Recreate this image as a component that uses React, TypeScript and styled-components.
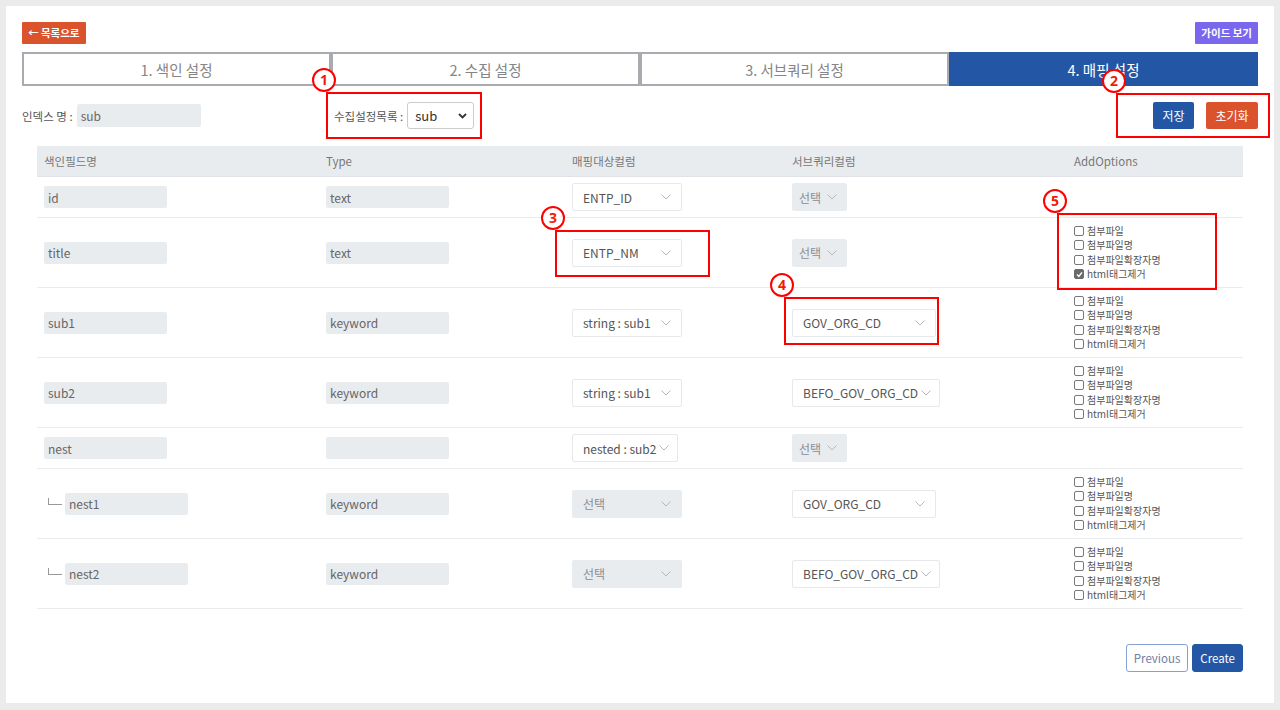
import { FC, ReactNode } from "react";
import styled, { createGlobalStyle } from "styled-components";

const BLUE = "#2356a5";
const ORANGE = "#db532d";

type SelectSpec = { label: string; width?: number; disabled?: boolean; compact?: boolean };

type FieldRow = {
  name: string;
  type: string;
  nested?: boolean;
  map: SelectSpec;
  sub: SelectSpec;
  options?: boolean[];
  mapMark?: number;
  subMark?: number;
  optionMark?: number;
};

const OPTION_LABELS = ["첨부파일", "첨부파일명", "첨부파일확장자명", "html태그제거"];
const NONE = [false, false, false, false];
const PICK_SMALL: SelectSpec = { label: "선택", width: 55, disabled: true, compact: true };
const PICK_WIDE: SelectSpec = { label: "선택", width: 110, disabled: true };

const rows: FieldRow[] = [
  { name: "id", type: "text", map: { label: "ENTP_ID", width: 110 }, sub: PICK_SMALL },
  {
    name: "title",
    type: "text",
    map: { label: "ENTP_NM", width: 110 },
    sub: PICK_SMALL,
    options: [false, false, false, true],
    mapMark: 3,
    optionMark: 5,
  },
  {
    name: "sub1",
    type: "keyword",
    map: { label: "string : sub1", width: 110 },
    sub: { label: "GOV_ORG_CD", width: 144 },
    options: NONE,
    subMark: 4,
  },
  {
    name: "sub2",
    type: "keyword",
    map: { label: "string : sub1", width: 110 },
    sub: { label: "BEFO_GOV_ORG_CD" },
    options: NONE,
  },
  { name: "nest", type: "", map: { label: "nested : sub2" }, sub: PICK_SMALL },
  {
    name: "nest1",
    type: "keyword",
    nested: true,
    map: PICK_WIDE,
    sub: { label: "GOV_ORG_CD", width: 144 },
    options: NONE,
  },
  {
    name: "nest2",
    type: "keyword",
    nested: true,
    map: PICK_WIDE,
    sub: { label: "BEFO_GOV_ORG_CD" },
    options: NONE,
  },
];

const Chevron = () => (
  <svg width="10" height="6" viewBox="0 0 10 6">
    <polyline points="0.5,0.5 5,5 9.5,0.5" fill="none" stroke="#b4b8bd" strokeWidth="1" />
  </svg>
);

const Select: FC<{ spec: SelectSpec }> = ({ spec }) => (
  <SelectBox $width={spec.width} $disabled={spec.disabled} $compact={spec.compact}>
    <span>{spec.label}</span>
    <Chevron />
  </SelectBox>
);

type MarkProps = {
  n: number;
  inset: [number, number, number, number];
  children: ReactNode;
};

// red annotation frame + numbered circle drawn over the thing it points at
const Mark: FC<MarkProps> = ({ n, inset, children }) => (
  <Marked>
    {children}
    <Frame $t={inset[0]} $r={inset[1]} $b={inset[2]} $l={inset[3]}>
      <Badge>{n}</Badge>
    </Frame>
  </Marked>
);

const Options: FC<{ values: boolean[] }> = ({ values }) => (
  <OptionList>
    {OPTION_LABELS.map((label, i) => (
      <Option key={label}>
        <Check $on={values[i]}>
          {values[i] && (
            <svg width="7" height="7" viewBox="0 0 7 7">
              <polyline points="1,3.6 2.8,5.4 6,1.4" fill="none" stroke="#fff" strokeWidth="1.4" />
            </svg>
          )}
        </Check>
        {label}
      </Option>
    ))}
  </OptionList>
);

const App: FC = () => {
  return (
    <>
      <GlobalStyle />
      <Panel>
        <TopBar>
          <SmallButton $bg={ORANGE}>← 목록으로</SmallButton>
          <SmallButton $bg="#7b67ee">가이드 보기</SmallButton>
        </TopBar>

        <Tabs>
          <Tab>1. 색인 설정</Tab>
          <Tab>2. 수집 설정</Tab>
          <Tab>3. 서브쿼리 설정</Tab>
          <Tab $active>4. 매핑 설정</Tab>
        </Tabs>

        <Toolbar>
          <Group>
            <Label>인덱스 명 :</Label>
            <Field readOnly value="sub" $width={124} $height={23} />
          </Group>
          <CollectGroup>
            <Mark n={1} inset={[-10, -8, -10, -8]}>
              <Group>
                <Label>수집설정목록 :</Label>
                <NativeSelect>
                  <span>sub</span>
                  <svg width="9" height="6" viewBox="0 0 9 6">
                    <polyline points="1,1 4.5,4.5 8,1" fill="none" stroke="#333" strokeWidth="1.8" />
                  </svg>
                </NativeSelect>
              </Group>
            </Mark>
          </CollectGroup>
          <div />
          <Actions>
            <Mark n={2} inset={[-9, -12, -9, -37]}>
              <ActionRow>
                <ActionButton $bg={BLUE} $width={41}>저장</ActionButton>
                <ActionButton $bg={ORANGE} $width={52}>초기화</ActionButton>
              </ActionRow>
            </Mark>
          </Actions>
        </Toolbar>

        <Table>
          <HeadRow>
            <Cell>색인필드명</Cell>
            <Cell>Type</Cell>
            <Cell>매핑대상컬럼</Cell>
            <Cell>서브쿼리컬럼</Cell>
            <Cell>AddOptions</Cell>
          </HeadRow>
          {rows.map((row) => (
            <Row key={row.name} $tall={!!row.options}>
              <Cell>
                {row.nested && <Branch />}
                <Field readOnly value={row.name} $width={123} $height={22} />
              </Cell>
              <Cell>
                <Field readOnly value={row.type} $width={123} $height={22} />
              </Cell>
              <Cell>
                {row.mapMark ? (
                  <Mark n={row.mapMark} inset={[-9, -28, -10, -17]}>
                    <Select spec={row.map} />
                  </Mark>
                ) : (
                  <Select spec={row.map} />
                )}
              </Cell>
              <Cell>
                {row.subMark ? (
                  <Mark n={row.subMark} inset={[-12, -3, -8, -8]}>
                    <Select spec={row.sub} />
                  </Mark>
                ) : (
                  <Select spec={row.sub} />
                )}
              </Cell>
              <Cell>
                {row.options &&
                  (row.optionMark ? (
                    <Mark n={row.optionMark} inset={[-11, -56, -8, -17]}>
                      <Options values={row.options} />
                    </Mark>
                  ) : (
                    <Options values={row.options} />
                  ))}
              </Cell>
            </Row>
          ))}
        </Table>

        <Footer>
          <FooterButton>Previous</FooterButton>
          <FooterButton $primary>Create</FooterButton>
        </Footer>
      </Panel>
    </>
  );
};

const GlobalStyle = createGlobalStyle`
  * { box-sizing: border-box; }
  html, body {
    margin: 0;
    background: #ebebeb;
  }
  body {
    padding: 6px;
    font-family: "Noto Sans CJK KR", "Noto Sans", sans-serif;
    color: #555;
  }
`;

const Panel = styled.div({
  background: "#fff",
  padding: "16px 16px 31px",
  minHeight: 697,
  width: 1268,
});

const TopBar = styled.div({
  display: "flex",
  justifyContent: "space-between",
  alignItems: "center",
});

const SmallButton = styled.button<{ $bg: string }>(({ $bg }) => ({
  height: 22,
  padding: "0 6px",
  border: "none",
  borderRadius: 1,
  background: $bg,
  color: "#fff",
  fontFamily: "inherit",
  fontSize: 10.5,
  fontWeight: 700,
  lineHeight: "22px",
}));

const Tabs = styled.div({
  display: "grid",
  gridTemplateColumns: "repeat(4, 1fr)",
  marginTop: 8,
  height: 34,
});

const Tab = styled.div<{ $active?: boolean }>(({ $active }) => ({
  display: "flex",
  alignItems: "center",
  justifyContent: "center",
  border: `2px solid ${$active ? BLUE : "#a8abaf"}`,
  background: $active ? BLUE : "#fff",
  color: $active ? "#fff" : "#858585",
  fontSize: 14.5,
  "& + &": { borderLeftWidth: $active ? 2 : 0 },
}));

const Toolbar = styled.div({
  display: "grid",
  gridTemplateColumns: "repeat(4, 1fr)",
  alignItems: "center",
  marginTop: 16,
  height: 27,
});

const Group = styled.div({
  display: "flex",
  alignItems: "center",
});

const CollectGroup = styled(Group)({
  paddingLeft: 3,
});

const Label = styled.span({
  fontSize: 11.5,
  color: "#555",
  marginRight: 4,
  whiteSpace: "nowrap",
});

const Field = styled.input<{ $width: number; $height: number }>(({ $width, $height }) => ({
  width: $width,
  height: $height,
  border: "none",
  outline: "none",
  borderRadius: 2,
  background: "#e9ecef",
  padding: "0 4px",
  fontFamily: "inherit",
  fontSize: 12,
  color: "#666",
}));

const NativeSelect = styled.div({
  display: "flex",
  alignItems: "center",
  justifyContent: "space-between",
  width: 67,
  height: 27,
  padding: "0 6px 0 7px",
  border: "1px solid #ccc",
  borderRadius: 3,
  background: "#fff",
  fontSize: 13,
  color: "#333",
});

const Actions = styled.div({
  display: "flex",
  justifyContent: "flex-end",
});

const ActionRow = styled.div({
  display: "flex",
  gap: 12,
});

const ActionButton = styled.button<{ $bg: string; $width: number }>(({ $bg, $width }) => ({
  width: $width,
  height: 27,
  border: "none",
  borderRadius: 2,
  background: $bg,
  color: "#fff",
  fontFamily: "inherit",
  fontSize: 12,
  padding: 0,
}));

const Marked = styled.div({
  position: "relative",
  display: "inline-flex",
});

const Frame = styled.span<{ $t: number; $r: number; $b: number; $l: number }>(
  ({ $t, $r, $b, $l }) => ({
    position: "absolute",
    top: $t,
    right: $r,
    bottom: $b,
    left: $l,
    border: "2.5px solid #f00",
    pointerEvents: "none",
    zIndex: 5,
  })
);

const Badge = styled.span({
  position: "absolute",
  left: -16,
  top: -26,
  width: 24,
  height: 24,
  borderRadius: "50%",
  border: "2.5px solid #f00",
  background: "#fff",
  color: "#f01a0a",
  fontFamily: "\"Noto Sans\", sans-serif",
  fontSize: 14,
  fontWeight: 700,
  display: "flex",
  alignItems: "center",
  justifyContent: "center",
  lineHeight: 1,
});

const COLUMNS = "282px 246px 220px 282px 176px";

const Table = styled.div({
  margin: "17px 15px 0",
});

const HeadRow = styled.div({
  display: "grid",
  gridTemplateColumns: COLUMNS,
  alignItems: "center",
  height: 31,
  background: "#e9ecef",
  borderBottom: "1px solid #dfe3e7",
  fontSize: 11.5,
  color: "#777",
});

const Row = styled.div<{ $tall: boolean }>(({ $tall }) => ({
  display: "grid",
  gridTemplateColumns: COLUMNS,
  alignItems: "center",
  minHeight: $tall ? 70 : 41,
  borderBottom: "1px solid #e9ecef",
}));

const Cell = styled.div({
  display: "flex",
  alignItems: "center",
  padding: "0 7px",
});

const Branch = styled.span({
  width: 14,
  height: 7,
  marginLeft: 4,
  marginRight: 3,
  marginTop: -5,
  borderLeft: "1px solid #999",
  borderBottom: "1px solid #999",
});

const SelectBox = styled.div<{ $width?: number; $disabled?: boolean; $compact?: boolean }>(
  ({ $width, $disabled, $compact }) => ({
    display: "flex",
    alignItems: "center",
    justifyContent: "space-between",
    gap: 3,
    width: $width ?? "auto",
    height: 28,
    padding: $compact ? "0 9px 0 6px" : `0 ${$width ? 10 : 8}px 0 10px`,
    border: `1px solid ${$disabled ? "#e9ecef" : "#e6e8eb"}`,
    borderRadius: 2,
    background: $disabled ? "#e9ecef" : "#fff",
    fontSize: 12,
    color: $disabled ? "#8a8f94" : "#555",
    whiteSpace: "nowrap",
  })
);

const OptionList = styled.div({
  display: "flex",
  flexDirection: "column",
  fontSize: 10,
  lineHeight: "14.5px",
  color: "#555",
});

const Option = styled.label({
  display: "flex",
  alignItems: "center",
  gap: 3,
  whiteSpace: "nowrap",
});

const Check = styled.span<{ $on: boolean }>(({ $on }) => ({
  display: "inline-flex",
  alignItems: "center",
  justifyContent: "center",
  width: 10,
  height: 10,
  border: `1px solid ${$on ? "#6a6a6a" : "#777"}`,
  borderRadius: 2,
  background: $on ? "#6a6a6a" : "#fff",
}));

const Footer = styled.div({
  display: "flex",
  justifyContent: "flex-end",
  gap: 4,
  margin: "35px 15px 0",
});

const FooterButton = styled.button<{ $primary?: boolean }>(({ $primary }) => ({
  height: 28,
  padding: "0 7px",
  border: `1px solid ${$primary ? BLUE : "#86a2d4"}`,
  borderRadius: 3,
  background: $primary ? BLUE : "#fff",
  color: $primary ? "#fff" : "#6f7ea0",
  fontFamily: "inherit",
  fontSize: 11.5,
}));

export default App;
